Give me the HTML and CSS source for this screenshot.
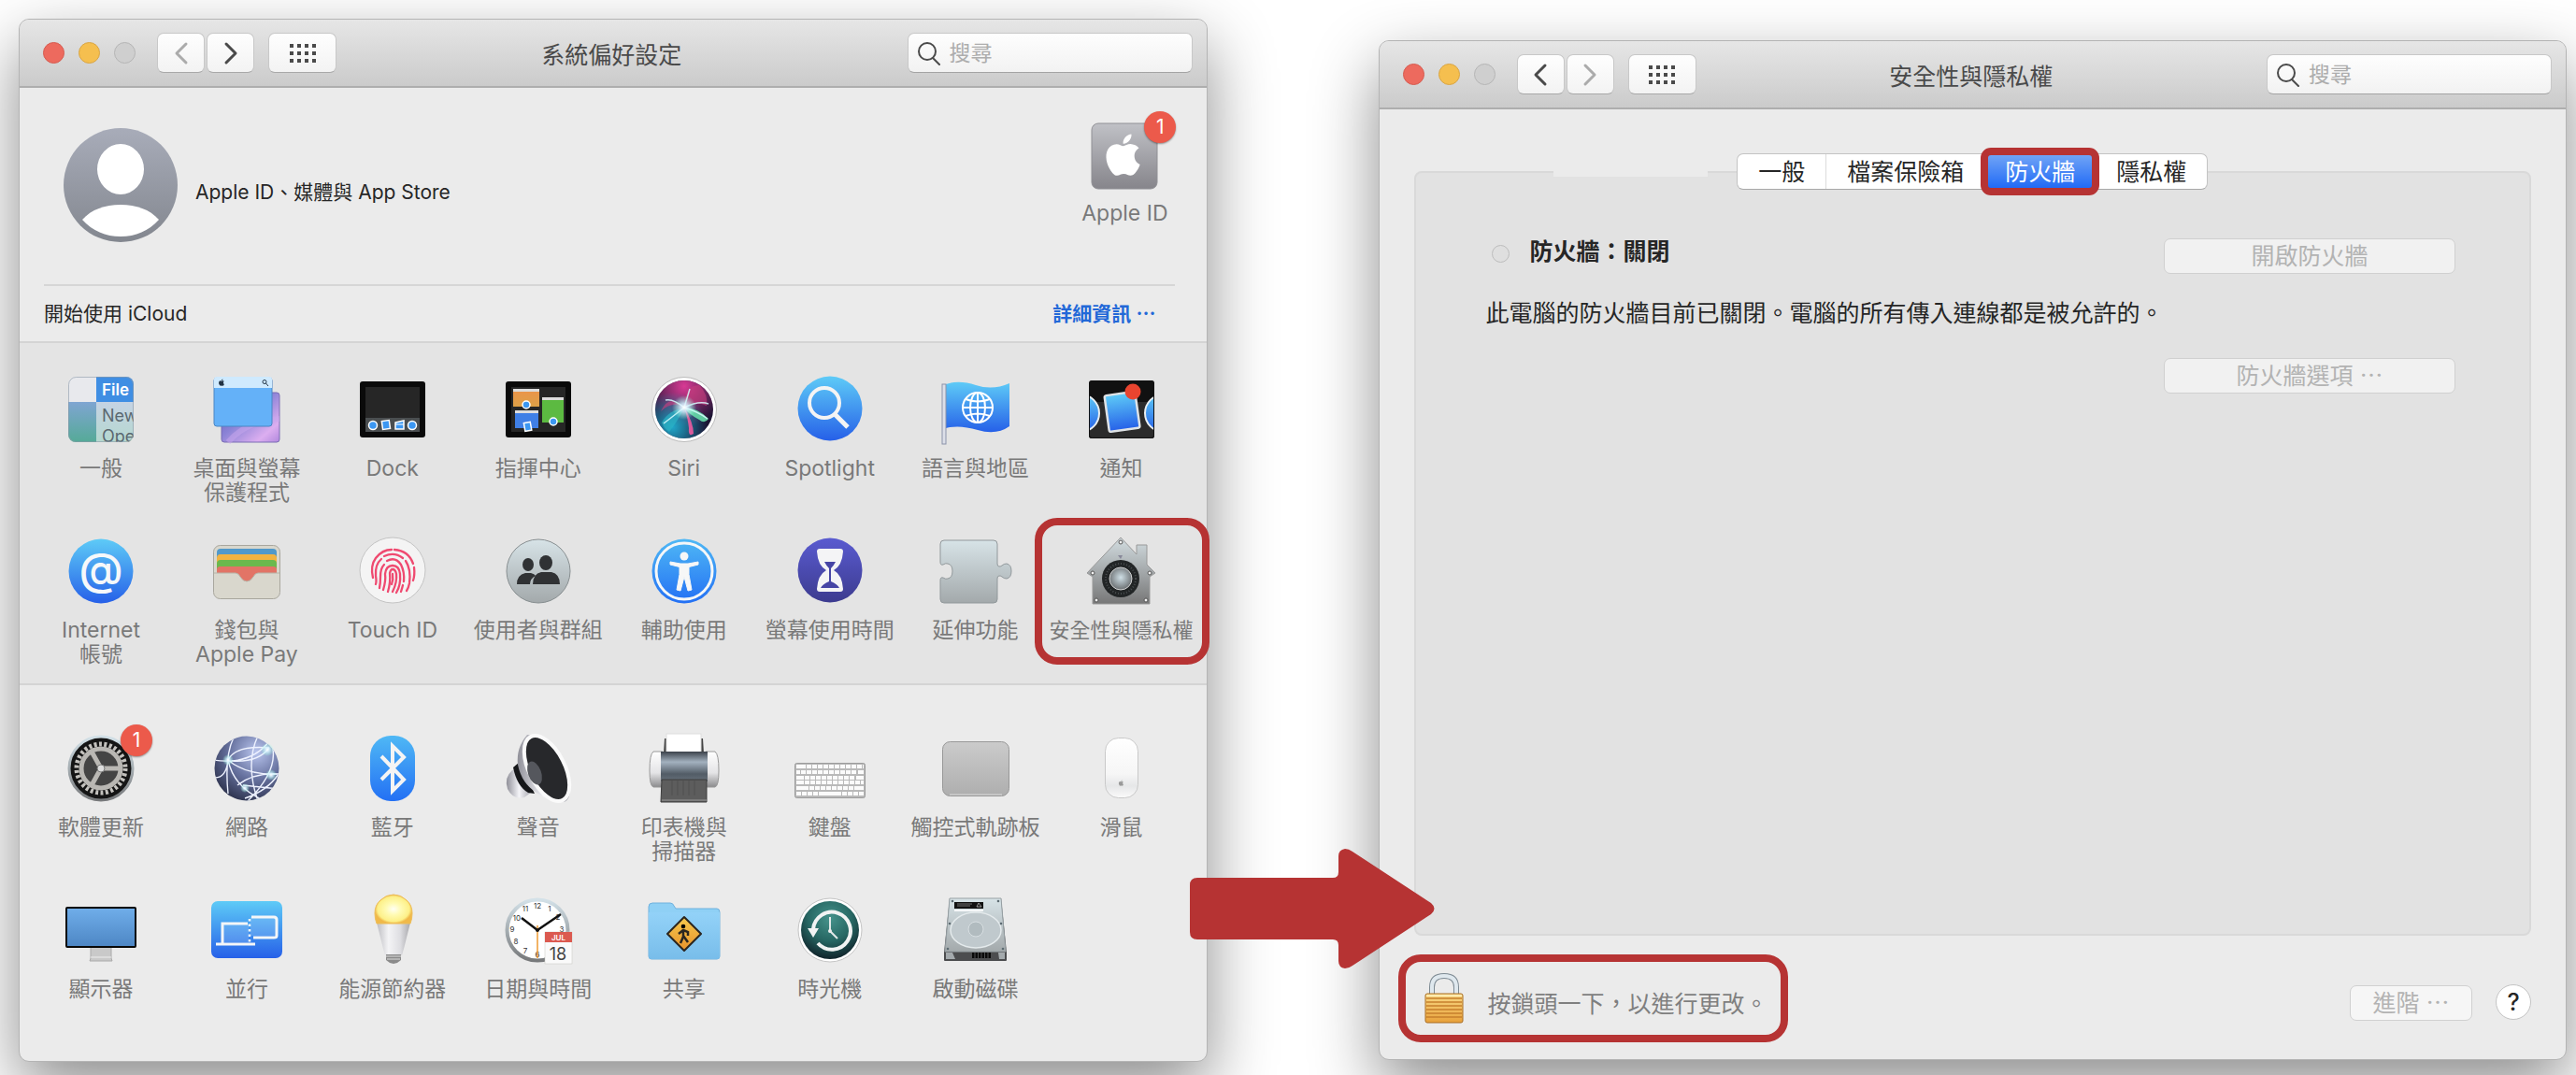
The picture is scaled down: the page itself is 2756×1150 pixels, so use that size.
FILE: index.html
```html
<!DOCTYPE html>
<html lang="zh-Hant">
<head>
    <meta charset="UTF-8">
    <meta name="viewport" content="width=device-width, initial-scale=1.0">
    <title>系統偏好設定</title>
    <link rel="stylesheet" href="styles.css">
</head>
<body>
    <!-- shared gradients -->
    <svg class="defs" aria-hidden="true">
        <defs>
            <linearGradient id="blue" x1="0" y1="0" x2="0" y2="1"><stop offset="0" stop-color="#5ecbf7"/><stop offset="1" stop-color="#2660e8"/></linearGradient>
            <linearGradient id="blue2" x1="0" y1="0" x2="0" y2="1"><stop offset="0" stop-color="#4fb8f5"/><stop offset="1" stop-color="#2370f4"/></linearGradient>
            <linearGradient id="steel" x1="0" y1="0" x2="0" y2="1"><stop offset="0" stop-color="#d7e3e7"/><stop offset="1" stop-color="#a3a9ab"/></linearGradient>
            <linearGradient id="house" x1="0" y1="0" x2="0" y2="1"><stop offset="0" stop-color="#d3dde1"/><stop offset="1" stop-color="#777"/></linearGradient>
            <linearGradient id="grey" x1="0" y1="0" x2="0" y2="1"><stop offset="0" stop-color="#c0c1c6"/><stop offset="1" stop-color="#86858b"/></linearGradient>
            <linearGradient id="avatar" x1="0" y1="0" x2="0" y2="1"><stop offset="0" stop-color="#a8acb9"/><stop offset="1" stop-color="#83878f"/></linearGradient>
            <linearGradient id="side" x1="0" y1="0" x2="0" y2="1"><stop offset="0" stop-color="#7fa5d2"/><stop offset="1" stop-color="#55aa97"/></linearGradient>
            <linearGradient id="menu" x1="0" y1="0" x2="0" y2="1"><stop offset="0" stop-color="#c5d3e4"/><stop offset="1" stop-color="#b5d8cf"/></linearGradient>
            <linearGradient id="purple" x1="0" y1="0" x2="1" y2="1"><stop offset="0" stop-color="#5a4cb0"/><stop offset=".45" stop-color="#8b83d6"/><stop offset=".8" stop-color="#dcaef0"/><stop offset="1" stop-color="#b188dd"/></linearGradient>
            <linearGradient id="indigo" x1="0" y1="0" x2="0" y2="1"><stop offset="0" stop-color="#5a5bd0"/><stop offset="1" stop-color="#3c3b8f"/></linearGradient>
            <linearGradient id="screen" x1="0" y1="0" x2="0" y2="1"><stop offset="0" stop-color="#70aeea"/><stop offset="1" stop-color="#4d86c4"/></linearGradient>
            <linearGradient id="metal" x1="0" y1="0" x2="0" y2="1"><stop offset="0" stop-color="#fff"/><stop offset=".6" stop-color="#e4e4e6"/><stop offset="1" stop-color="#8b8b8d"/></linearGradient>
            <linearGradient id="roller" x1="0" y1="0" x2="0" y2="1"><stop offset="0" stop-color="#3c424a"/><stop offset=".35" stop-color="#a3b1bf"/><stop offset=".75" stop-color="#525c66"/><stop offset="1" stop-color="#66707a"/></linearGradient>
            <linearGradient id="pad" x1="0" y1="0" x2="0" y2="1"><stop offset="0" stop-color="#cbcbcb"/><stop offset="1" stop-color="#aeaeae"/></linearGradient>
            <linearGradient id="mouse" x1="0" y1="0" x2="0" y2="1"><stop offset="0" stop-color="#fff"/><stop offset=".6" stop-color="#f6f6f6"/><stop offset=".8" stop-color="#e6e7e8"/><stop offset="1" stop-color="#fafafa"/></linearGradient>
            <linearGradient id="bulbBody" x1="0" y1="0" x2="1" y2="0"><stop offset="0" stop-color="#bdbdc2"/><stop offset=".35" stop-color="#f4f4f6"/><stop offset=".7" stop-color="#dedee2"/><stop offset="1" stop-color="#a8a8ac"/></linearGradient>
            <linearGradient id="folder" x1="0" y1="0" x2="0" y2="1"><stop offset="0" stop-color="#93d2f8"/><stop offset="1" stop-color="#78bdea"/></linearGradient>
            <linearGradient id="sign" x1="0" y1="0" x2="0" y2="1"><stop offset="0" stop-color="#f6c94d"/><stop offset="1" stop-color="#e8932c"/></linearGradient>
            <linearGradient id="rim" x1="0" y1="0" x2="0" y2="1"><stop offset="0" stop-color="#d3e1e8"/><stop offset="1" stop-color="#77797b"/></linearGradient>
            <linearGradient id="cone" x1="0" y1="0" x2="1" y2="0"><stop offset="0" stop-color="#8f8f98"/><stop offset=".5" stop-color="#f4f4f8"/><stop offset="1" stop-color="#a0a0a8"/></linearGradient>
            <linearGradient id="gold" x1="0" y1="0" x2="0" y2="1"><stop offset="0" stop-color="#f9da86"/><stop offset="1" stop-color="#e8a13b"/></linearGradient>
            <linearGradient id="orange" x1="0" y1="0" x2="0" y2="1"><stop offset="0" stop-color="#eb944b"/><stop offset="1" stop-color="#dda046"/></linearGradient>
            <radialGradient id="bulb"><stop offset="0" stop-color="#fffff4"/><stop offset=".4" stop-color="#fffbb4"/><stop offset=".85" stop-color="#fdf088"/><stop offset="1" stop-color="#f0b94a"/></radialGradient>
            <radialGradient id="globe" cx=".65" cy=".25" r=".85"><stop offset="0" stop-color="#b9c5ee"/><stop offset=".5" stop-color="#66719e"/><stop offset="1" stop-color="#272c45"/></radialGradient>
            <radialGradient id="tm" cx=".5" cy=".3" r=".7"><stop offset="0" stop-color="#46938c"/><stop offset=".55" stop-color="#276763"/><stop offset="1" stop-color="#10242b"/></radialGradient>
            <radialGradient id="siriPink" cx=".5" cy=".1" r=".7"><stop offset="0" stop-color="#d83a94"/><stop offset="1" stop-color="#d83a94" stop-opacity="0"/></radialGradient>
            <radialGradient id="siriTeal" cx=".3" cy=".8" r=".6"><stop offset="0" stop-color="#1fa7c9"/><stop offset="1" stop-color="#1fa7c9" stop-opacity="0"/></radialGradient>
            <radialGradient id="glow"><stop offset="0" stop-color="#fff"/><stop offset=".35" stop-color="#d8f4ff" stop-opacity=".8"/><stop offset="1" stop-color="#9fd" stop-opacity="0"/></radialGradient>
            <radialGradient id="knob" cx=".5" cy=".45"><stop offset="0" stop-color="#cfdfe6"/><stop offset="1" stop-color="#74797c"/></radialGradient>
            <path id="apple" d="M17.05 12.54c-.03-2.6 2.13-3.86 2.23-3.92-1.22-1.78-3.11-2.02-3.78-2.05-1.6-.16-3.13.95-3.95.95-.82 0-2.07-.93-3.4-.9-1.75.03-3.37 1.02-4.27 2.58-1.83 3.16-.47 7.84 1.3 10.4.87 1.26 1.9 2.67 3.26 2.62 1.31-.05 1.8-.85 3.39-.85 1.58 0 2.03.85 3.41.82 1.41-.02 2.3-1.28 3.16-2.54 1-1.46 1.41-2.87 1.43-2.94-.03-.02-2.75-1.06-2.78-4.17zM14.5 4.9c.72-.87 1.2-2.08 1.07-3.3-1.04.05-2.29.69-3.03 1.56-.67.77-1.25 2-1.1 3.19 1.16.09 2.34-.58 3.06-1.45z"/>
            <symbol id="dots" viewBox="0 0 28 20">
                <path d="M0 2h28M0 10h28M0 18h28" stroke="#4a4a4a" stroke-width="4" stroke-dasharray="4 4" fill="none"/>
            </symbol>
            <symbol id="search" viewBox="0 0 26 26">
                <circle cx="11" cy="11" r="9" fill="none" stroke="#4a4a4a" stroke-width="2"/><path d="M17 18l7 7" stroke="#4a4a4a" stroke-width="2" stroke-linecap="round"/>
            </symbol>
        </defs>
    </svg>

    <main class="desktop">
        <section class="window prefs" aria-label="系統偏好設定">
            <header class="titlebar">
                <div class="lights"><span class="light red"></span><span class="light yellow"></span><span class="light"></span></div>
                <div class="nav">
                    <button class="tool" aria-label="返回" disabled><svg width="16" height="26" viewBox="0 0 16 26"><path d="M13 3L3 13l10 10"/></svg></button>
                    <button class="tool" aria-label="前進"><svg width="16" height="26" viewBox="0 0 16 26"><path d="M3 3l10 10L3 23"/></svg></button>
                </div>
                <button class="tool wide" aria-label="顯示全部"><svg class="grid-icon"><use href="#dots"/></svg></button>
                <h1>系統偏好設定</h1>
                <label class="search"><svg class="search-icon"><use href="#search"/></svg><input type="text" placeholder="搜尋" aria-label="搜尋"></label>
            </header>

            <div class="account">
                <div class="account-main">
                    <svg class="avatar" viewBox="0 0 122 122">
                        <circle cx="61" cy="61" r="61" fill="url(#avatar)"/>
                        <ellipse cx="61" cy="44" rx="25" ry="27" fill="#fff"/>
                        <path d="M20 98C30 87 44 82 61 82s31 5 41 16c-11 12-25 18-41 18s-30-6-41-18z" fill="#fff"/>
                    </svg>
                    <p class="account-text">Apple ID、媒體與 App Store</p>
                    <a class="apple-id" href="#">
                        <span class="icon-wrap">
                            <svg width="72" height="72" viewBox="0 0 72 72"><rect x="1" y="1" width="70" height="70" rx="7" fill="url(#grey)" stroke="#909095"/><use href="#apple" fill="#fff" transform="translate(10 9) scale(2.15)"/></svg>
                            <span class="badge">1</span>
                        </span>
                        <span>Apple ID</span>
                    </a>
                </div>
                <div class="icloud">
                    <span>開始使用 iCloud</span>
                    <a href="#">詳細資訊 ⋯</a>
                </div>
            </div>

            <div class="pane shaded">
                <a class="item" href="#">
                    <svg viewBox="0 0 80 80">
                        <clipPath id="c1"><rect x="5" y="5" width="70" height="70" rx="8"/></clipPath>
                        <g clip-path="url(#c1)">
                            <rect x="5" y="5" width="30" height="27" fill="#e8e9ed"/><rect x="35" y="5" width="40" height="27" fill="#3f8ee3"/>
                            <rect x="5" y="32" width="30" height="43" fill="url(#side)"/><rect x="35" y="32" width="40" height="43" fill="url(#menu)"/>
                            <text x="41" y="25" class="t-file">File</text><text x="41" y="53" class="t-menu">New</text><text x="41" y="75" class="t-menu">Ope</text>
                        </g>
                        <rect x="5.500" y="5.500" width="69" height="69" rx="8" fill="none" stroke="#8a9aa6" opacity=".6"/>
                    </svg>
                    <span>一般</span>
                </a>
                <a class="item" href="#">
                    <svg viewBox="0 0 80 80">
                        <rect x="13" y="22" width="62" height="53" rx="3" fill="url(#purple)" stroke="#7a6cb4"/>
                        <path d="M20 75Q40 52 75 50" stroke="#c9a7ee" stroke-width="6" opacity=".5" fill="none"/>
                        <rect x="5" y="6" width="62" height="52" rx="3" fill="#64b1f8" stroke="#4a86c4"/>
                        <path d="M5 17V8q0-3 3-3h56q3 0 3 3v9z" fill="#cfeafe"/>
                        <use href="#apple" fill="#234" transform="translate(9 7) scale(.35)"/><circle cx="59" cy="10.500" r="2" fill="none" stroke="#234"/><path d="M60.500 12l2.500 3" stroke="#234"/>
                    </svg>
                    <span>桌面與螢幕<br>保護程式</span>
                </a>
                <a class="item" href="#">
                    <svg viewBox="0 0 80 80">
                        <rect x="5" y="10" width="70" height="60" rx="3" fill="#0a0a0a"/><rect x="11" y="16" width="58" height="48" fill="#262626"/><rect x="11" y="49" width="58" height="15" fill="#4a4e50"/>
                        <g fill="#3b97f2" stroke="#fff" stroke-width="1.500"><circle cx="19" cy="57" r="4.500"/><rect x="29" y="52" width="8" height="9" transform="rotate(-8 33 57)"/><path d="M43 54l9-2v9h-9z"/><circle cx="61" cy="57" r="4.500"/></g>
                        <path d="M43 56h9" stroke="#fff"/>
                    </svg>
                    <span>Dock</span>
                </a>
                <a class="item" href="#">
                    <svg viewBox="0 0 80 80">
                        <rect x="5" y="10" width="70" height="60" rx="3" fill="#0a0a0a"/><rect x="11" y="16" width="58" height="48" fill="#262626"/>
                        <rect x="13" y="19" width="28" height="18" fill="url(#orange)"/><rect x="13" y="18" width="28" height="3" fill="#ddd"/>
                        <rect x="44" y="27" width="23" height="27" fill="#5cba41"/><rect x="44" y="27" width="23" height="3" fill="#ddd"/>
                        <rect x="15" y="42" width="25" height="18" fill="#3f7fe6"/><rect x="15" y="41" width="25" height="3" fill="#ddd"/>
                        <g fill="#3b97f2" stroke="#fff" stroke-width="1.500"><circle cx="27" cy="35" r="4"/><circle cx="56" cy="53" r="4"/><rect x="25" y="54" width="7" height="9" transform="rotate(-10 28 58)"/></g>
                    </svg>
                    <span>指揮中心</span>
                </a>
                <a class="item" href="#">
                    <svg viewBox="0 0 80 80">
                        <circle cx="40" cy="40" r="34.500" fill="#fff" stroke="#bbb"/><circle cx="40" cy="40" r="31" fill="#1b1433"/>
                        <circle cx="40" cy="40" r="31" fill="url(#siriPink)"/><circle cx="40" cy="40" r="31" fill="url(#siriTeal)"/>
                        <path d="M40 38Q24 22 15 42Q28 30 40 38zM40 38Q40 14 56 14Q66 24 64 36Q52 30 40 38z" fill="#c53d7d" opacity=".65"/>
                        <path d="M40 39Q24 40 16 54Q18 60 24 64Q32 54 40 39z" fill="#2bb2c5" opacity=".7"/>
                        <path d="M40 38Q54 38 66 50Q62 56 56 51Q46 46 40 38z" fill="#65dca8" opacity=".9"/>
                        <path d="M40 38Q50 54 50 66Q44 70 45 60Q44 50 40 38z" fill="#e55a9d" opacity=".95"/>
                        <path d="M40 38L18 55M40 38Q28 28 20 30M40 38Q56 30 66 34M40 38L46 18M40 38Q54 42 65 50" stroke="#d9fbff" stroke-width="1.500" fill="none" opacity=".85"/>
                        <circle cx="40" cy="38" r="13" fill="url(#glow)"/>
                    </svg>
                    <span>Siri</span>
                </a>
                <a class="item" href="#">
                    <svg viewBox="0 0 80 80"><circle cx="40" cy="39" r="34.500" fill="url(#blue)"/><circle cx="34" cy="33" r="16" fill="none" stroke="#f4f4f4" stroke-width="4"/><path d="M45 45l14 14" stroke="#f4f4f4" stroke-width="5"/></svg>
                    <span>Spotlight</span>
                </a>
                <a class="item" href="#">
                    <svg viewBox="0 0 80 80">
                        <path d="M8 13Q22 8 40 14T76 12V58Q62 68 42 62T8 60z" fill="url(#blue)"/><rect x="4" y="13" width="4" height="64" fill="#dcdfe8" stroke="#8c93aa"/>
                        <g fill="none" stroke="#fff" stroke-width="2"><circle cx="42" cy="38" r="16"/><ellipse cx="42" cy="38" rx="8" ry="16"/><path d="M42 22v32M26 38h32M29 29q13 5 26 0M29 47q13-5 26 0"/></g>
                    </svg>
                    <span>語言與地區</span>
                </a>
                <a class="item" href="#">
                    <svg viewBox="0 0 80 80">
                        <clipPath id="c2"><rect x="5" y="9" width="70" height="62" rx="3"/></clipPath>
                        <g clip-path="url(#c2)"><rect x="5" y="9" width="70" height="62" fill="#111"/><rect x="5" y="32" width="70" height="39" fill="#2b2b2b"/>
                        <g fill="url(#blue)" stroke="#e8eef2" stroke-width="2"><circle cx="-4" cy="44" r="20"/><circle cx="85" cy="44" r="20"/></g></g>
                        <rect x="24" y="23" width="33" height="39" rx="2" fill="url(#blue)" stroke="#dfe3e6" stroke-width="2.500" transform="rotate(-8 40 42)"/><circle cx="52" cy="21" r="8.500" fill="#e9442f"/>
                        <rect x="5.500" y="9.500" width="69" height="61" rx="3" fill="none" stroke="#111"/>
                    </svg>
                    <span>通知</span>
                </a>

                <a class="item" href="#">
                    <svg viewBox="0 0 80 80"><circle cx="40" cy="40" r="34.500" fill="url(#blue)"/><text x="40" y="55" class="t-at">@</text></svg>
                    <span>Internet<br>帳號</span>
                </a>
                <a class="item" href="#">
                    <svg viewBox="0 0 80 80">
                        <rect x="4.500" y="12.500" width="71" height="57" rx="7" fill="#d9d7cd" stroke="#a9a79e"/>
                        <path d="M8 42V20q0-4 4-4h56q4 0 4 4v22z" fill="#5199ca"/><path d="M8 42V26q0-4 4-4h56q4 0 4 4v16z" fill="#f2b340"/>
                        <path d="M8 42V32q0-4 4-4h56q4 0 4 4v10z" fill="#6bb94d"/><path d="M8 42v-4q0-3 4-3h56q4 0 4 3v4H52q-3 0-5 4-3 5-7 5t-7-5q-2-4-5-4z" fill="#e27466"/>
                        <path d="M5 42h23q3 0 5 4 3 5 7 5t7-5q2-4 5-4h23" fill="none" stroke="#b7b4a8"/>
                    </svg>
                    <span>錢包與<br>Apple Pay</span>
                </a>
                <a class="item" href="#">
                    <svg viewBox="0 0 80 80"><circle cx="40" cy="39" r="35" fill="#f4f4f4" stroke="#c4c4c4"/>
                        <g fill="none" stroke="#ef4a70" stroke-width="2.300" stroke-linecap="round">
                            <path d="M19 47q-3-13 3-21 7-9 17-9M42 17q15 1 20 15M63 36q1 8-1 14"/>
                            <path d="M22 54q1-3 0-9-1-12 6-18M31 24q11-5 20 2M54 29q6 9 4 24-1 5-3 8"/>
                            <path d="M26 58q1-5 1-12 0-9 4-13M34 29q9-5 15 4 4 8 3 18M51 55q-1 4-2 7"/>
                            <path d="M30 60q3-10 2-17 1-9 8-9 7 0 8 9 1 12-4 20"/>
                            <path d="M35 62q3-10 2-20 1-4 3-4 3 0 4 5 1 9-4 19"/><path d="M40 43q1 6-1 11"/>
                        </g>
                    </svg>
                    <span>Touch ID</span>
                </a>
                <a class="item" href="#">
                    <svg viewBox="0 0 80 80"><circle cx="40" cy="40" r="34" fill="url(#steel)" stroke="#888f91"/>
                        <g fill="#303234"><ellipse cx="29" cy="33" rx="6" ry="7"/><path d="M17 54q0-10 9-12h6q4 1 5 3-6 3-6 9z"/><ellipse cx="48" cy="31" rx="7" ry="8"/><path d="M34 54q0-11 9-13h11q9 2 9 13z"/></g>
                    </svg>
                    <span>使用者與群組</span>
                </a>
                <a class="item" href="#">
                    <svg viewBox="0 0 80 80"><circle cx="40" cy="40" r="34.500" fill="url(#blue2)"/><circle cx="40" cy="40" r="30" fill="none" stroke="#f5f7f8" stroke-width="3"/>
                        <g fill="#f7f7f7"><circle cx="40" cy="24" r="4.500"/><path d="M25 30l11 2h8l11-2v3l-10 2.500v8l3 16.500-4 1-4-15-4 15-4-1 3-16.500v-8L25 33z" stroke="#f7f7f7" stroke-linejoin="round"/></g>
                    </svg>
                    <span>輔助使用</span>
                </a>
                <a class="item" href="#">
                    <svg viewBox="0 0 80 80"><circle cx="40" cy="39" r="34.500" fill="url(#indigo)"/>
                        <path d="M29 16h22q3 0 3 3-1 15-10 20 9 5 10 20 0 3-3 3H29q-3 0-3-3 1-15 10-20-9-5-10-20 0-3 3-3z" fill="#f4f4f6"/>
                        <path d="M34 30h12q-2 4-5 7v14q7 3 9 7H30q2-4 9-7V37q-3-3-5-7z" fill="#4645a5"/>
                    </svg>
                    <span>螢幕使用時間</span>
                </a>
                <a class="item" href="#">
                    <svg viewBox="0 0 80 80"><path d="M6 7h53q4 0 4 4v21q0 3 2 3t3-1q2-2 5-2 5 1 5 8t-5 8q-3 0-5-2-1-1-3-1t-2 3v22q0 4-4 4H6q-4 0-4-4V50q0-4 3-3 3 2 5 1 5-1 5-8t-5-8q-2-1-5 1-3 1-3-3V11q0-4 4-4z" fill="url(#steel)" stroke="#91989b"/></svg>
                    <span>延伸功能</span>
                </a>
                <a class="item marked" href="#">
                    <svg viewBox="0 0 80 80">
                        <path d="M39 4l17 18V12h11v21l9 9-6 4v29H9V46l-6-4z" fill="url(#house)" stroke="#999"/>
                        <path d="M36 23h5l-2 4z" fill="#889"/>
                        <circle cx="39" cy="48" r="20" fill="#222526"/><circle cx="39" cy="48" r="16" fill="none" stroke="#4a4e50" stroke-width="2" stroke-dasharray="1 2"/><circle cx="39" cy="48" r="12" fill="url(#knob)" stroke="#eee" stroke-width=".8"/>
                        <g fill="#f3f3f3" stroke="#555"><circle cx="39" cy="9" r="2"/><circle cx="9" cy="42" r="2"/><circle cx="70" cy="42" r="2"/><circle cx="13" cy="71" r="2"/><circle cx="66" cy="71" r="2"/></g>
                    </svg>
                    <span>安全性與隱私權</span>
                </a>
            </div>

            <div class="pane hardware">
                <a class="item" href="#">
                    <span class="icon-wrap">
                        <svg viewBox="0 0 80 80">
                            <circle cx="40" cy="40" r="34" fill="#151515" stroke="url(#rim)" stroke-width="3"/>
                            <circle cx="40" cy="40" r="26" fill="none" stroke="#c4c2be" stroke-width="5" stroke-dasharray="3 2.440"/>
                            <circle cx="40" cy="40" r="21" fill="#444" stroke="#b9b7b3" stroke-width="5"/>
                            <path d="M40 40h20M40 40L30 22M40 40L30 58" stroke="#bab8b4" stroke-width="5"/><circle cx="40" cy="40" r="4" fill="#ddd" stroke="#777"/>
                        </svg>
                        <span class="badge">1</span>
                    </span>
                    <span>軟體更新</span>
                </a>
                <a class="item" href="#">
                    <svg viewBox="0 0 80 80"><circle cx="40" cy="40" r="34.500" fill="url(#globe)"/>
                        <clipPath id="c3"><circle cx="40" cy="40" r="34.500"/></clipPath>
                        <g clip-path="url(#c3)" fill="none" stroke="#eef2ff" stroke-width="1.400"><path d="M4 31q40 6 60-20M20 31Q40 48 76 46M26 7q-10 20-6 60M52 5q-14 30 0 70M64 8q16 30-26 70M20 31q8-16 44-13M6 50q12 0 14-19M30 58q18-14 45-12M36 58l38 4M64 18q-12 16-40 14M38 72q24-8 36-26M20 31q6 30 40 44"/></g>
                        <circle cx="20" cy="31" r="6" fill="url(#glow)"/><circle cx="62" cy="20" r="7" fill="url(#glow)"/><circle cx="66" cy="47" r="6" fill="url(#glow)"/><circle cx="38" cy="61" r="5" fill="url(#glow)"/>
                    </svg>
                    <span>網路</span>
                </a>
                <a class="item" href="#">
                    <svg viewBox="0 0 80 80"><rect x="16" y="5" width="48" height="70" rx="22" fill="url(#blue2)"/><path d="M28 27l24 25-12 12V16l12 12-24 24" fill="none" stroke="#f4f4f4" stroke-width="4"/></svg>
                    <span>藍牙</span>
                </a>
                <a class="item" href="#">
                    <svg viewBox="0 0 80 80">
                        <path d="M12 42q-9 8-5 20 6 12 18 9l8-6-14-25z" fill="url(#cone)"/><path d="M13 39q4 20 16 27l7 1-16-34z" fill="#16171a"/>
                        <path d="M28 4q-12 14-10 32 4 20 20 30 14 10 28 10 8 0 8-16-2-20-16-38Q44 4 28 4z" fill="url(#cone)"/>
                        <ellipse cx="49" cy="40" rx="19" ry="38" transform="rotate(-27 49 40)" fill="#27282b" stroke="#fafafa" stroke-width="4"/>
                        <ellipse cx="36" cy="45" rx="7" ry="13" transform="rotate(-20 36 45)" fill="#55575d"/>
                    </svg>
                    <span>聲音</span>
                </a>
                <a class="item" href="#">
                    <svg viewBox="0 0 80 80">
                        <path d="M19 8h3v16h-4zM57 8h3l1 16h-4z" fill="#444"/><rect x="21" y="3" width="37" height="24" fill="#fff" stroke="#ddd"/>
                        <path d="M7 22h10v38H7q-4-1-4-18t4-20zM73 22H63v38h10q4-1 4-18t-4-20z" fill="url(#metal)" stroke="#999"/>
                        <rect x="15" y="22" width="50" height="32" fill="url(#roller)"/>
                        <path d="M16 52h48v24H15z" fill="#5d5d5d" stroke="#3c3c3c"/><path d="M27 53v16M33 53v16M39 53v16M45 53v16M51 53v16" stroke="#505050" stroke-width="1"/><path d="M16 74h48" stroke="#999"/>
                    </svg>
                    <span>印表機與<br>掃描器</span>
                </a>
                <a class="item" href="#">
                    <svg viewBox="0 0 80 80"><rect x="2.500" y="34.500" width="75" height="37" rx="2" fill="#b9b9b9" stroke="#9c9c9c"/>
                        <g stroke="#fbfbfb" fill="none" stroke-width="4"><path d="M4 38h10M4 44h4M4 50h8M4 55h8M4 61h13M70 44h6M68 50h8M66 61h10M28 67h24"/><path d="M15 38h61M9 44h60M13 50h54M13 55h63M18 61h47M4 67h23M53 67h23" stroke-dasharray="5 1"/></g>
                    </svg>
                    <span>鍵盤</span>
                </a>
                <a class="item" href="#">
                    <svg viewBox="0 0 80 80"><rect x="4.500" y="11.500" width="71" height="58" rx="8" fill="url(#pad)" stroke="#989898"/><path d="M12 68h56" stroke="#ddd"/></svg>
                    <span>觸控式軌跡板</span>
                </a>
                <a class="item" href="#">
                    <svg viewBox="0 0 80 80"><rect x="22.500" y="7.500" width="35" height="64" rx="14" fill="url(#mouse)" stroke="#c9c9c9"/><use href="#apple" fill="#999" transform="translate(36 52) scale(.3)"/></svg>
                    <span>滑鼠</span>
                </a>

                <a class="item" href="#">
                    <svg viewBox="0 0 80 80"><path d="M29 58h22v12l1 3H28l1-3z" fill="#c9c9c9" stroke="#aaa"/><path d="M29 69h22" stroke="#eee"/><rect x="3" y="16" width="74" height="42" rx="1" fill="url(#screen)" stroke="#080808" stroke-width="2"/></svg>
                    <span>顯示器</span>
                </a>
                <a class="item" href="#">
                    <svg viewBox="0 0 80 80"><rect x="2" y="9" width="76" height="61" rx="7" fill="url(#blue)"/>
                        <path d="M14 33h28v20H14zM44 26h27v20H44z" fill="#fff" opacity=".15"/>
                        <path d="M7 55h42M14 54V33h27M45 26h24q3 0 3 3v17q0 2-3 2H47" fill="none" stroke="#f4f6f8" stroke-width="3"/><path d="M43 28v26" stroke="#f4f6f8" stroke-width="2.500" stroke-dasharray="2.500 3"/>
                    </svg>
                    <span>並行</span>
                </a>
                <a class="item" href="#">
                    <svg viewBox="0 0 80 80"><path d="M23 32h36l-7 28-2 7H32l-2-7z" fill="url(#bulbBody)"/><path d="M33 66h16v6l-4 3-4 1-4-1-4-3z" fill="#8a8a8a"/><path d="M33 68h16M34 71h14" stroke="#ddd"/><path d="M21 22q0-9 6-14 6-6 14-6t14 6q6 5 6 14 0 6-2 11H23q-2-5-2-11z" fill="url(#bulb)" stroke="#edbd58"/></svg>
                    <span>能源節約器</span>
                </a>
                <a class="item" href="#">
                    <svg viewBox="0 0 80 80"><circle cx="39" cy="40" r="32.500" fill="#fff" stroke="url(#rim)" stroke-width="4"/>
                        <g class="t-clock"><text x="39" y="17">12</text><text x="52" y="20">1</text><text x="61" y="29">2</text><text x="65" y="42">3</text><text x="39" y="69">6</text><text x="26" y="65">7</text><text x="16" y="55">8</text><text x="12" y="42">9</text><text x="17" y="30">10</text><text x="26" y="20">11</text></g>
                        <path d="M39 40L22 27M39 40l25-17" stroke="#111" stroke-width="2.500"/><path d="M39 35v35" stroke="#ee9a32" stroke-width="1.500"/><circle cx="39" cy="40" r="2" fill="#111"/>
                        <rect x="47" y="42" width="29" height="34" fill="#fafafa" stroke="#c5c5c0" stroke-width=".5"/><rect x="47" y="42" width="29" height="11" fill="#db5a50"/><text x="61.500" y="51" class="t-jul">JUL</text><text x="61" y="72" class="t-day">18</text>
                    </svg>
                    <span>日期與時間</span>
                </a>
                <a class="item" href="#">
                    <svg viewBox="0 0 80 80"><path d="M2 15q0-4 4-4h19q3 0 4 3l2 3h44q3 0 3 4v47q0 3-3 3H5q-3 0-3-3z" fill="#8fd0f5" stroke="#6fb1de"/><path d="M2 21h76v47q0 3-3 3H5q-3 0-3-3z" fill="url(#folder)"/>
                        <path d="M40 26l18 18-18 18-18-18z" fill="url(#sign)" stroke="#2b2620" stroke-width="2" stroke-linejoin="round"/>
                        <circle cx="39" cy="36" r="2.300"/><path d="M39 39v8l-3 7M39 46l5 7M39 40l-5 4M39 40l5 2v4" fill="none" stroke="#2b2620" stroke-width="2.500"/>
                    </svg>
                    <span>共享</span>
                </a>
                <a class="item" href="#">
                    <svg viewBox="0 0 80 80"><circle cx="40" cy="40" r="34" fill="#fff" stroke="#c5c5c5"/><circle cx="40" cy="40" r="31" fill="url(#tm)"/>
                        <path d="M22 39A20 20 0 1 1 27 54" fill="none" stroke="#f1f3f3" stroke-width="4"/><path d="M16 38h12l-6 10z" fill="#f1f3f3"/><path d="M40 26v15l8 8" fill="none" stroke="#e2e8e8" stroke-width="2"/><circle cx="40" cy="41" r="2" fill="#eee"/>
                    </svg>
                    <span>時光機</span>
                </a>
                <a class="item" href="#">
                    <svg viewBox="0 0 80 80"><path d="M12 6h55l6 58v8q0 1-1 1H7q-1 0-1-1v-8z" fill="#4c4d4f"/><path d="M12 6h55l5 57H7z" fill="url(#steel)" stroke="#97a0a4"/>
                        <rect x="17" y="10" width="31" height="7" fill="#111"/><path d="M20 12h16M20 14h14" stroke="#888" stroke-width=".8"/><path d="M41 15l2-4 3 4z" fill="none" stroke="#ccc" stroke-width=".7"/><path d="M17 19h31" stroke="#f4f6f7" stroke-width="2"/>
                        <ellipse cx="40" cy="40" rx="27" ry="19" fill="#c0c9cd" stroke="#e4eaec" stroke-width="1.500"/><circle cx="40" cy="39" r="8" fill="#b1bbbf" stroke="#d8dfe2"/>
                        <path d="M8 64h7l3 7H8zM71 64h-7l1 7h6z" fill="#a4aaad"/><path d="M36 67h20" stroke="#0a0a0a" stroke-width="6" stroke-dasharray="2.500 1"/>
                        <g fill="#5d6b72"><circle cx="15" cy="9" r="1.300"/><circle cx="64" cy="9" r="1.300"/><circle cx="12" cy="33" r="1.300"/><circle cx="67" cy="33" r="1.300"/><circle cx="10" cy="60" r="1.300"/><circle cx="69" cy="60" r="1.300"/></g>
                    </svg>
                    <span>啟動磁碟</span>
                </a>
            </div>
        </section>

        <section class="window security" aria-label="安全性與隱私權">
            <header class="titlebar">
                <div class="lights"><span class="light red"></span><span class="light yellow"></span><span class="light"></span></div>
                <div class="nav">
                    <button class="tool" aria-label="返回"><svg width="16" height="26" viewBox="0 0 16 26"><path d="M13 3L3 13l10 10"/></svg></button>
                    <button class="tool" aria-label="前進" disabled><svg width="16" height="26" viewBox="0 0 16 26"><path d="M3 3l10 10L3 23"/></svg></button>
                </div>
                <button class="tool wide" aria-label="顯示全部"><svg class="grid-icon"><use href="#dots"/></svg></button>
                <h1>安全性與隱私權</h1>
                <label class="search"><svg class="search-icon"><use href="#search"/></svg><input type="text" placeholder="搜尋" aria-label="搜尋"></label>
            </header>

            <div class="security-body">
                <div class="tabs">
                    <button>一般</button>
                    <button>檔案保險箱</button>
                    <button class="active">防火牆</button>
                    <button>隱私權</button>
                </div>
                <div class="panel">
                    <div class="row">
                        <span class="status-dot"></span>
                        <h2>防火牆：關閉</h2>
                        <button class="push" disabled>開啟防火牆</button>
                    </div>
                    <p>此電腦的防火牆目前已關閉。電腦的所有傳入連線都是被允許的。</p>
                    <div class="row">
                        <button class="push" disabled>防火牆選項 ⋯</button>
                    </div>
                </div>
                <footer class="actions">
                    <button class="lock">
                        <svg width="42" height="54" viewBox="0 0 42 54">
                            <path d="M8 24V15Q8 3 21 3t13 12v9" fill="none" stroke="#7d8a93" stroke-width="6"/><path d="M8 24V15Q8 3 21 3t13 12v9" fill="none" stroke="#dfe8ee" stroke-width="4"/>
                            <rect x="1" y="22" width="40" height="31" rx="2" fill="url(#gold)" stroke="#a86c22"/>
                            <path d="M2 27h38M2 31h38M2 35h38M2 39h38M2 43h38M2 47h38" stroke="#c67f2c" stroke-width="1.500"/><path d="M2 24h38" stroke="#fdebb0" stroke-width="2"/>
                        </svg>
                        <span>按鎖頭一下，以進行更改。</span>
                    </button>
                    <button class="push small" disabled>進階 ⋯</button>
                    <button class="help" aria-label="輔助說明">?</button>
                </footer>
            </div>

            <svg class="arrow" viewBox="0 0 262 128" aria-hidden="true">
                <path d="M8 31h145q6 0 6-6V8q0-7 7-8 4 0 8 3l84 55q7 6 0 12l-84 55q-4 3-8 3-7-1-7-8v-17q0-6-6-6H8q-8 0-8-8V39q0-8 8-8z" fill="#b63333"/>
            </svg>
        </section>
    </main>
</body>
</html>
```
FILE: styles.css
```css
* {
    box-sizing: border-box;
}

body {
    margin: 0;
    background: #fff;
    font-family: Inter, "Noto Sans CJK TC", sans-serif;
    font-size: 25px;
    color: #262626;
}

button, input {
    font: inherit;
    color: inherit;
}

h1, h2, p {
    margin: 0;
    font-size: 25px;
    font-weight: 400;
}

a {
    color: inherit;
    text-decoration: none;
}

.defs {
    position: absolute;
    width: 0;
    height: 0;
}

.desktop {
    display: flex;
    gap: 183px;
    min-height: 100vh;
    padding: 20px 10px 14px 20px;
}

.window {
    flex: 1;
    min-width: 0;
    display: flex;
    flex-direction: column;
    position: relative;
    background: #ebebeb;
    border: 1px solid #b4b4b4;
    border-radius: 11px;
    box-shadow: 0 28px 70px rgba(0, 0, 0, 0.45);
}

.security {
    margin: 23px 0 2px;
}

/* title bar */
.titlebar {
    display: flex;
    align-items: center;
    height: 73px;
    padding: 0 15px 0 25px;
    background: linear-gradient(#e6e6e6, #cbcbcb);
    border-bottom: 2px solid #aeaeae;
    border-radius: 10px 10px 0 0;
}

.titlebar h1 {
    flex: 1;
    padding-right: 22px;
    text-align: center;
    color: #4a4a4a;
}

.lights {
    display: flex;
    gap: 15px;
}

.light {
    width: 23px;
    height: 23px;
    border: 1px solid #b5b5b5;
    border-radius: 50%;
    background: #cfcfcf;
}

.light.red {
    background: #ed6a5e;
    border-color: #d65b50;
}

.light.yellow {
    background: #f5bf4f;
    border-color: #d9a544;
}

.nav {
    display: flex;
    gap: 2px;
    margin: 0 15px 0 23px;
}

.tool {
    display: flex;
    align-items: center;
    justify-content: center;
    width: 51px;
    height: 43px;
    padding: 0;
    border: 1px solid #c8c8c8;
    border-bottom-color: #a9a9a9;
    border-radius: 7px;
    background: linear-gradient(#fefefe, #f3f3f3);
}

.tool.wide {
    width: 73px;
}

.tool path {
    fill: none;
    stroke: #4a4a4a;
    stroke-width: 3px;
    stroke-linecap: round;
    stroke-linejoin: round;
}

.tool:disabled path {
    stroke: #ababab;
}

.grid-icon {
    width: 28px;
    height: 20px;
}

.search {
    display: flex;
    align-items: center;
    gap: 9px;
    width: 305px;
    height: 43px;
    padding: 0 9px;
    border: 1px solid #c8c8c8;
    border-bottom-color: #a4a4a4;
    border-radius: 7px;
    background: linear-gradient(#fefefe, #f2f2f2);
}

.search-icon {
    flex: none;
    width: 26px;
    height: 26px;
}

.search input {
    width: 100%;
    padding: 0;
    border: 0;
    outline: none;
    background: none;
    font-size: 23px;
}

.search input::placeholder {
    color: #adadad;
}

/* account header */
.account {
    padding: 0 34px 0 26px;
    font-size: 21px;
}

.account-main {
    display: flex;
    align-items: center;
    height: 212px;
    padding: 0 0 2px 21px;
    border-bottom: 2px solid #d6d6d6;
}

.avatar {
    width: 122px;
    height: 122px;
}

.account-text {
    flex: 1;
    margin-left: 19px;
    padding-top: 12px;
    font-size: 21px;
}

.apple-id {
    display: flex;
    flex-direction: column;
    align-items: center;
    gap: 12px;
    margin: 0 7px 24px 0;
    font-size: 23px;
    line-height: 26px;
    color: #797979;
}

.apple-id .icon-wrap {
    height: 72px;
}

.icon-wrap {
    position: relative;
}

.badge {
    position: absolute;
    top: -12px;
    right: -19px;
    width: 34px;
    height: 34px;
    border-radius: 50%;
    background: #ec5a4b;
    box-shadow: 0 1px 2px rgba(0, 0, 0, 0.4);
    color: #fff;
    font-size: 21px;
    line-height: 34px;
    text-align: center;
}

.item .badge {
    top: -7px;
    right: -15px;
}

.icloud {
    display: flex;
    justify-content: space-between;
    align-items: center;
    height: 59px;
    padding: 0 20px 4px 0;
}

.icloud a {
    color: #2268d8;
    font-weight: 600;
}

/* icon grid */
.pane {
    display: grid;
    grid-template-columns: repeat(8, 1fr);
    row-gap: 31px;
    padding: 31px 13px 18px 9px;
}

.shaded {
    background: #e4e4e4;
    border-top: 2px solid #d4d4d4;
    border-bottom: 2px solid #d4d4d4;
}

.hardware {
    padding-top: 49px;
}

.item {
    position: relative;
    display: flex;
    flex-direction: column;
    align-items: center;
    gap: 10px;
    min-height: 142px;
    font-size: 23px;
    line-height: 26px;
    text-align: center;
    white-space: nowrap;
    color: #797979;
}

.item svg {
    display: block;
    width: 80px;
    height: 80px;
}

.marked {
    font-size: 22px;
}

.marked::after {
    content: "";
    position: absolute;
    inset: -17px -16px 2px -15px;
    border: 8px solid #b63333;
    border-radius: 24px;
}

.t-file {
    font-size: 17px;
    font-weight: 600;
    fill: #fff;
}

.t-menu {
    font-size: 18px;
    fill: #5b6870;
}

.t-at {
    font-size: 48px;
    font-weight: 500;
    text-anchor: middle;
    fill: #f6f8fa;
}

.t-clock {
    font-size: 8px;
    text-anchor: middle;
    fill: #333;
}

.t-jul {
    font-size: 8px;
    font-weight: 600;
    text-anchor: middle;
    fill: #fff;
}

.t-day {
    font-size: 18px;
    text-anchor: middle;
    fill: #444;
}

/* security window */
.security-body {
    flex: 1;
    display: flex;
    flex-direction: column;
    padding: 47px 37px 18px;
}

.tabs {
    position: relative;
    z-index: 1;
    display: flex;
    align-self: center;
    height: 39px;
    margin-bottom: -20px;
    border: 1px solid #c3c3c3;
    border-bottom-color: #a8a8a8;
    border-radius: 7px;
    background: #fff;
}

.tabs button {
    padding: 0 22px;
    border: 0;
    border-left: 1px solid #dcdcdc;
    background: none;
    line-height: 36px;
}

.tabs button:first-child,
.tabs .active,
.tabs .active + button {
    border-left: 0;
}

.tabs .active {
    position: relative;
    background: linear-gradient(#72a5f6, #1f69f6);
    color: #fff;
}

.tabs .active::after {
    content: "";
    position: absolute;
    inset: -7px -4px;
    border: 8px solid #b63333;
    border-radius: 11px;
}

.panel {
    flex: 1;
    position: relative;
    padding: 70px 79px 0 75px;
    border: 2px solid #d9d9d9;
    border-radius: 8px;
    background: #e2e2e2;
}

/* blank strip over the top edge */
.panel::before {
    content: "";
    position: absolute;
    top: -2px;
    left: 147px;
    width: 165px;
    height: 6px;
    background: #ebebeb;
}

.row {
    display: flex;
    align-items: flex-start;
}

.status-dot {
    width: 19px;
    height: 19px;
    margin: 7px 22px 0 6px;
    border: 1px solid #bdbdbd;
    border-radius: 50%;
    background: #dfdfdf;
}

.row h2 {
    font-weight: 600;
    line-height: 28px;
}

.panel p {
    margin: 22px 0 28px;
    line-height: 40px;
}

.push {
    width: 312px;
    height: 38px;
    margin-left: auto;
    padding: 0;
    border: 1px solid #d0d0d0;
    border-radius: 7px;
    background: #f1f1f1;
    color: #b3b3b3;
    line-height: 34px;
}

.actions {
    display: flex;
    align-items: center;
    margin: 20px 0 0 -17px;
}

.lock {
    display: flex;
    align-items: center;
    gap: 26px;
    height: 94px;
    padding: 0 13px 0 20px;
    border: 8px solid #b63333;
    border-radius: 24px;
    background: none;
    color: #7f7f7f;
}

.lock span {
    padding-top: 8px;
}

.push.small {
    width: 131px;
    margin: 9px 25px 0 auto;
    background: #f6f6f6;
}

.help {
    width: 38px;
    height: 38px;
    margin-top: 7px;
    padding: 0;
    border: 1px solid #c4c4c4;
    border-radius: 50%;
    background: #fff;
    font-weight: 500;
}

/* arrow between the two windows */
.arrow {
    position: absolute;
    left: -203px;
    bottom: 97px;
    width: 262px;
    height: 128px;
}
```
